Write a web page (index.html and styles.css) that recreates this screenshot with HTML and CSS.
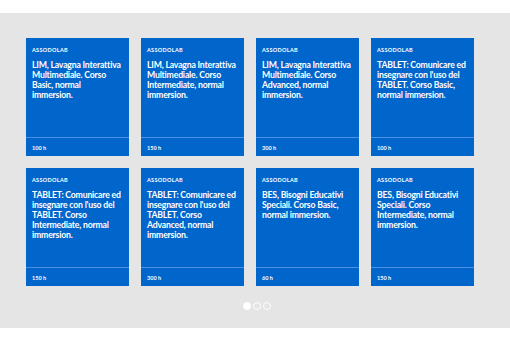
FILE: index.html
```
<!DOCTYPE html>
<html>
<head>
<meta charset="utf-8">
<title>Corsi ASSODOLAB</title>
<link rel="stylesheet" href="styles.css">
</head>
<body>
<section class="courses">
  <div class="grid">
    <div class="card">
      <div class="card-body">
        <div class="brand">ASSODOLAB</div>
        <div class="title">LIM, Lavagna Interattiva<br>Multimediale. Corso<br>Basic, normal<br>immersion.</div>
      </div>
      <div class="card-foot">100 h</div>
    </div>
    <div class="card">
      <div class="card-body">
        <div class="brand">ASSODOLAB</div>
        <div class="title">LIM, Lavagna Interattiva<br>Multimediale. Corso<br>Intermediate, normal<br>immersion.</div>
      </div>
      <div class="card-foot">150 h</div>
    </div>
    <div class="card">
      <div class="card-body">
        <div class="brand">ASSODOLAB</div>
        <div class="title">LIM, Lavagna Interattiva<br>Multimediale. Corso<br>Advanced, normal<br>immersion.</div>
      </div>
      <div class="card-foot">300 h</div>
    </div>
    <div class="card">
      <div class="card-body">
        <div class="brand">ASSODOLAB</div>
        <div class="title">TABLET: Comunicare ed<br>insegnare con l'uso del<br>TABLET. Corso Basic,<br>normal immersion.</div>
      </div>
      <div class="card-foot">100 h</div>
    </div>
    <div class="card">
      <div class="card-body">
        <div class="brand">ASSODOLAB</div>
        <div class="title">TABLET: Comunicare ed<br>insegnare con l'uso del<br>TABLET. Corso<br>Intermediate, normal<br>immersion.</div>
      </div>
      <div class="card-foot">150 h</div>
    </div>
    <div class="card">
      <div class="card-body">
        <div class="brand">ASSODOLAB</div>
        <div class="title">TABLET: Comunicare ed<br>insegnare con l'uso del<br>TABLET. Corso<br>Advanced, normal<br>immersion.</div>
      </div>
      <div class="card-foot">300 h</div>
    </div>
    <div class="card">
      <div class="card-body">
        <div class="brand">ASSODOLAB</div>
        <div class="title">BES, Bisogni Educativi<br>Speciali. Corso Basic,<br>normal immersion.</div>
      </div>
      <div class="card-foot">60 h</div>
    </div>
    <div class="card">
      <div class="card-body">
        <div class="brand">ASSODOLAB</div>
        <div class="title">BES, Bisogni Educativi<br>Speciali. Corso<br>Intermediate, normal<br>immersion.</div>
      </div>
      <div class="card-foot">150 h</div>
    </div>
  </div>
  <div class="dots">
    <span class="dot active"></span>
    <span class="dot"></span>
    <span class="dot"></span>
  </div>
</section>
</body>
</html>
```
FILE: styles.css
```
body {
  margin: 0;
  background-color: white;
  font-family: Lato, "Open Sans", sans-serif;
}

.courses {
  margin-top: 13px;
  height: 315px;
  box-sizing: border-box;
  background-color: #e5e5e5;
  padding: 25px 0 0 26px;
}

.grid {
  display: grid;
  grid-template-columns: repeat(4, 103px);
  grid-auto-rows: 118px;
  gap: 12px;
}

.card {
  display: flex;
  flex-direction: column;
  background-color: #0066cc;
  color: white;
}

.card-body {
  flex: 1;
  padding: 8px 0 0 6px;
}

.brand {
  font-size: 5.5px;
  font-weight: 700;
  line-height: 8px;
  letter-spacing: 0.3px;
}

.title {
  margin-top: 6px;
  font-size: 8.7px;
  font-weight: 700;
  line-height: 10px;
  letter-spacing: -0.2px;
  white-space: nowrap;
}

.card-foot {
  height: 19px;
  border-top: 1px solid #4d90e0;
  box-sizing: border-box;
  padding: 1px 6px 0 6px;
  font-size: 5.5px;
  font-weight: 700;
  line-height: 18px;
}

.dots {
  display: flex;
  justify-content: center;
  gap: 2px;
  margin-top: 16px;
  padding-right: 23px;
}

.dot {
  width: 8px;
  height: 8px;
  box-sizing: border-box;
  border: 1px solid white;
  border-radius: 50%;
}

.dot.active {
  background-color: white;
}
```
